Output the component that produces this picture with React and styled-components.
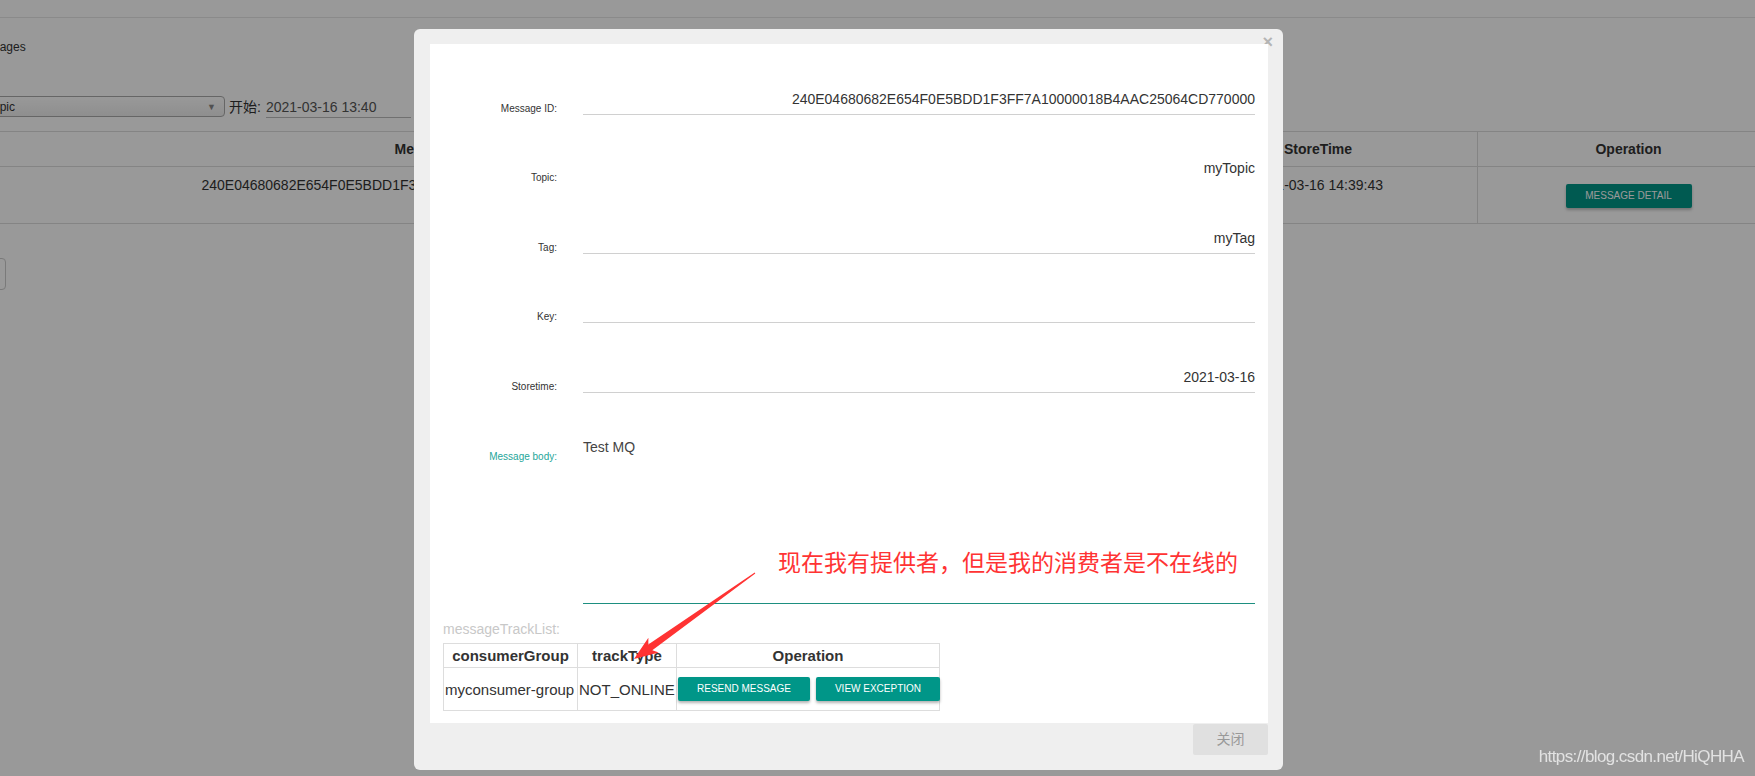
import React from 'react';
import styled, { createGlobalStyle } from 'styled-components';

const GlobalStyle = createGlobalStyle`
	html, body {
		margin: 0;
		padding: 0;
		background: #fff;
	}
	body {
		font-family: "Liberation Sans", Arial, "Noto Sans CJK SC", sans-serif;
		color: #333;
	}
	* {
		box-sizing: border-box;
	}
`;

const cjk = `"Liberation Sans", "Noto Sans CJK SC", sans-serif`;

// ---------- page behind the dialog ----------
const Page = styled.div`
	width: 1755px;
	height: 776px;
	overflow: hidden;
	background: #fff;
	font-size: 14px;
`;
const TopRule = styled.div`
	height: 18px;
	border-bottom: 1px solid #e6e6e6;
`;
const Title = styled.div`
	margin: 21px 0 0 -29px;
	font-size: 12px;
	line-height: 16px;
`;
const FilterRow = styled.div`
	display: flex;
	align-items: flex-end;
	height: 22px;
	margin-top: 41px;
`;
const Select = styled.div`
	margin-left: -20px;
	width: 245px;
	height: 21px;
	border: 1px solid #aaa;
	border-radius: 4px;
	background: linear-gradient(#fff, #eee);
	font-size: 12px;
	padding: 0 8px 0 6px;
	display: flex;
	align-items: center;
	justify-content: space-between;
	align-self: flex-start;
	span:last-child {
		font-size: 9px;
		color: #888;
	}
`;
const StartLabel = styled.span`
	margin-left: 4px;
	font-family: ${cjk};
	line-height: 22px;
	align-self: flex-start;
`;
const DateInput = styled.div`
	margin-left: 5px;
	width: 145px;
	line-height: 20px;
	color: #555;
	border-bottom: 1px solid #bbb;
`;
const BgTable = styled.div`
	margin-top: 13px;
	width: 1779px;
	border-top: 1px solid #ddd;
`;
const BgRow = styled.div`
	display: flex;
	height: ${p => p.$h}px;
	border-bottom: 1px solid #ddd;
`;
const BgCell = styled.div`
	flex: none;
	width: ${p => p.$w}px;
	text-align: center;
	border-left: ${p => (p.$line ? '1px solid #ddd' : 'none')};
	font-weight: ${p => (p.$head ? 700 : 400)};
	line-height: ${p => (p.$head ? '34px' : '20px')};
	padding-top: ${p => (p.$head ? 0 : 8)}px;
	white-space: nowrap;
	overflow: hidden;
`;
const DetailButton = styled.div`
	display: inline-block;
	margin-top: 9px;
	width: 126px;
	height: 24px;
	line-height: 24px;
	background: #009688;
	color: #fff;
	font-size: 10px;
	border-radius: 2px;
	box-shadow: 0 2px 3px rgba(0, 0, 0, 0.25);
`;
const PagerButton = styled.div`
	margin: 34px 0 0 -54px;
	width: 60px;
	height: 32px;
	border: 1px solid #ccc;
	border-radius: 4px;
`;

// ---------- dialog ----------
const Overlay = styled.div`
	position: fixed;
	inset: 0;
	background: rgba(0, 0, 0, 0.4);
`;
const Modal = styled.div`
	position: fixed;
	left: 414px;
	top: 29px;
	width: 869px;
	height: 741px;
	background: #efefef;
	border-radius: 6px;
	padding: 15px 15px 0 16px;
	display: flex;
	flex-direction: column;
`;
const CloseX = styled.div`
	position: absolute;
	top: 4px;
	right: 10px;
	font-size: 18px;
	line-height: 18px;
	font-weight: 700;
	color: #b4b4b4;
`;
const ModalBody = styled.div`
	position: relative;
	height: 679px;
	background: #fff;
	padding-top: 1px;
`;
const FormRow = styled.div`
	display: flex;
	align-items: flex-end;
	height: 69.5px;
`;
const Label = styled.div`
	flex: none;
	width: 127px;
	text-align: right;
	font-size: 10px;
	line-height: 12px;
	margin-top: ${p => p.$top || 0}px;
	color: ${p => (p.$active ? '#26a69a' : '#333')};
`;
const Value = styled.div`
	margin-left: 26px;
	width: 672px;
	text-align: right;
	font-size: 14px;
	line-height: 20px;
	padding-bottom: 5px;
	min-height: 26px;
	border-bottom: 1px solid ${p => (p.$bare ? 'transparent' : '#d0d0d0')};
	white-space: nowrap;
`;
const BodyRow = styled.div`
	display: flex;
	align-items: flex-start;
	height: 211.5px;
`;
const BodyArea = styled.div`
	margin-left: 26px;
	width: 672px;
	height: 100%;
	padding-top: 44.5px;
	font-size: 14px;
	line-height: 20px;
	color: #444;
	border-bottom: 1px solid #1d8f80;
`;
const TrackTitle = styled.div`
	margin: 15px 0 4px 13px;
	font-size: 14px;
	line-height: 20px;
	color: #c8c8c8;
`;
const TrackTable = styled.table`
	margin-left: 13px;
	width: 496px;
	table-layout: fixed;
	border-collapse: collapse;
	font-size: 15px;
	th, td {
		border: 1px solid #ddd;
		padding: 0 1px;
		white-space: nowrap;
	}
	th {
		height: 24px;
		text-align: center;
		font-weight: 700;
	}
	td {
		height: 43px;
	}
`;
const OpCell = styled.td`
	&& {
		padding: 0 0 0 1px;
	}
`;
const ButtonGroup = styled.div`
	display: flex;
	gap: 6px;
`;
const TealButton = styled.div`
	flex: none;
	width: ${p => p.$w}px;
	height: 24px;
	line-height: 24px;
	text-align: center;
	background: #009688;
	color: #fff;
	font-size: 10px;
	border-radius: 2px;
	box-shadow: 0 2px 3px rgba(0, 0, 0, 0.3);
`;
const Note = styled.div`
	position: absolute;
	left: 348px;
	top: 504px;
	font-family: ${cjk};
	font-size: 23px;
	line-height: 30px;
	color: #f33;
	white-space: nowrap;
`;
const Arrow = styled.svg`
	position: absolute;
	left: 0;
	top: 0;
	width: 100%;
	height: 100%;
	pointer-events: none;
`;
const Footer = styled.div`
	display: flex;
	justify-content: flex-end;
	padding-top: 1px;
`;
const ShutButton = styled.div`
	width: 75px;
	height: 31px;
	line-height: 31px;
	text-align: center;
	background: #e0e0e0;
	color: #999;
	font-family: ${cjk};
	font-size: 14px;
	border-radius: 2px;
`;
const Watermark = styled.div`
	position: fixed;
	right: 11px;
	top: 747px;
	font-size: 17px;
	line-height: 20px;
	color: #e2e2e2;
	letter-spacing: -0.6px;
`;

const bgCols = [165, 536, 458, 318, 302];

const fields = [
	{ label: 'Message ID:', value: '240E04680682E654F0E5BDD1F3FF7A10000018B4AAC25064CD770000' },
	{ label: 'Topic:', value: 'myTopic', bare: true },
	{ label: 'Tag:', value: 'myTag' },
	{ label: 'Key:', value: '' },
	{ label: 'Storetime:', value: '2021-03-16' },
];

export default function App() {
	return (
		<>
			<GlobalStyle />
			<Page>
				<TopRule />
				<Title>Messages</Title>
				<FilterRow>
					<Select>
						<span>Topic</span>
						<span>▼</span>
					</Select>
					<StartLabel>开始:</StartLabel>
					<DateInput>2021-03-16 13:40</DateInput>
				</FilterRow>
				<BgTable>
					<BgRow $h={35}>
						<BgCell $head $w={bgCols[0]}></BgCell>
						<BgCell $head $w={bgCols[1]}>Message ID</BgCell>
						<BgCell $head $w={bgCols[2]}></BgCell>
						<BgCell $head $w={bgCols[3]}>StoreTime</BgCell>
						<BgCell $head $line $w={bgCols[4]}>Operation</BgCell>
					</BgRow>
					<BgRow $h={57}>
						<BgCell $w={bgCols[0]}></BgCell>
						<BgCell $w={bgCols[1]}>240E04680682E654F0E5BDD1F3FF7A10000018B4AAC25064CD770000</BgCell>
						<BgCell $w={bgCols[2]}></BgCell>
						<BgCell $w={bgCols[3]}>2021-03-16 14:39:43</BgCell>
						<BgCell $line $w={bgCols[4]}>
							<DetailButton>MESSAGE DETAIL</DetailButton>
						</BgCell>
					</BgRow>
				</BgTable>
				<PagerButton />
			</Page>

			<Overlay />
			<Modal>
				<CloseX>×</CloseX>
				<ModalBody>
					{fields.map(f => (
						<FormRow key={f.label}>
							<Label>{f.label}</Label>
							<Value $bare={f.bare}>{f.value}</Value>
						</FormRow>
					))}
					<BodyRow>
						<Label $active $top={58.5}>Message body:</Label>
						<BodyArea>Test MQ</BodyArea>
					</BodyRow>
					<TrackTitle>messageTrackList:</TrackTitle>
					<TrackTable>
						<colgroup>
							<col style={{ width: 134 }} />
							<col style={{ width: 99 }} />
							<col style={{ width: 263 }} />
						</colgroup>
						<thead>
							<tr>
								<th>consumerGroup</th>
								<th>trackType</th>
								<th>Operation</th>
							</tr>
						</thead>
						<tbody>
							<tr>
								<td>myconsumer-group</td>
								<td>NOT_ONLINE</td>
								<OpCell>
									<ButtonGroup>
										<TealButton $w={132}>RESEND MESSAGE</TealButton>
										<TealButton $w={124}>VIEW EXCEPTION</TealButton>
									</ButtonGroup>
								</OpCell>
							</tr>
						</tbody>
					</TrackTable>

					<Note>现在我有提供者，但是我的消费者是不在线的</Note>
					<Arrow>
						<polygon
							fill="#f33"
							points="325.3,529.4 222.3,606.2 228.8,608.4 204,615 218.4,593.8 218.3,600.6 324.7,528.6"
						/>
					</Arrow>
				</ModalBody>
				<Footer>
					<ShutButton>关闭</ShutButton>
				</Footer>
			</Modal>
			<Watermark>https://blog.csdn.net/HiQHHA</Watermark>
		</>
	);
}
